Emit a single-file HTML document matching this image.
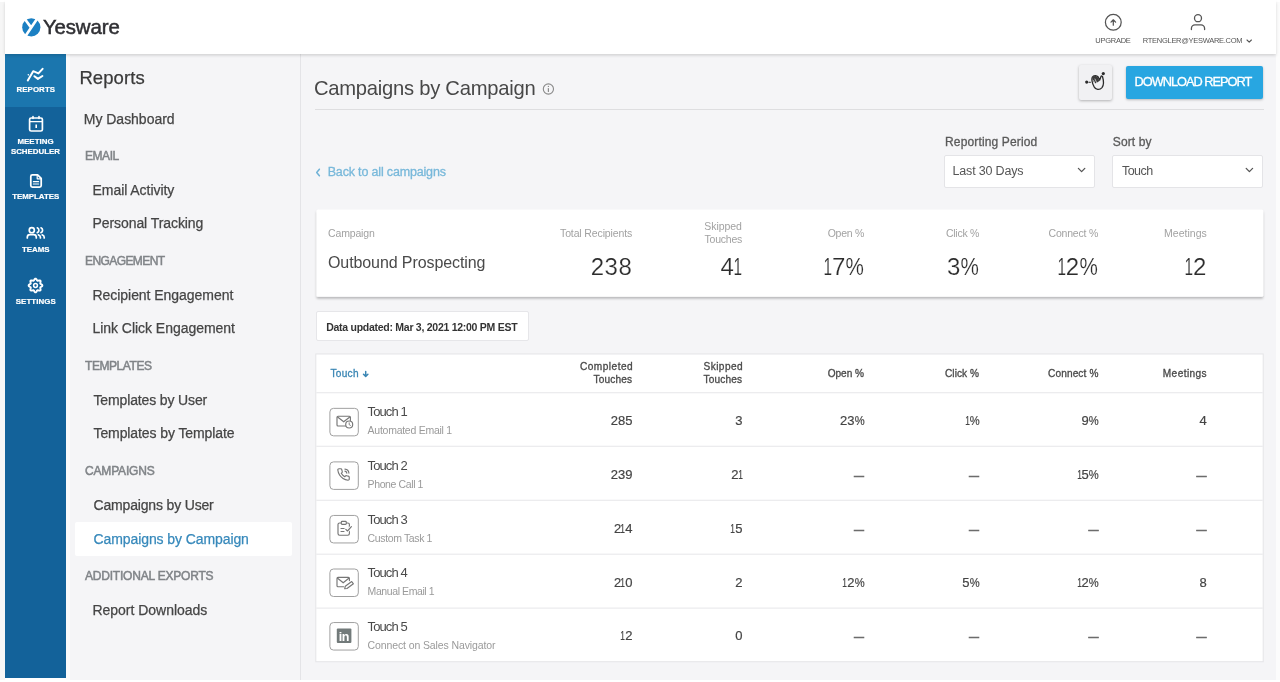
<!DOCTYPE html>
<html lang="en">
<head>
<meta charset="utf-8">
<title>Yesware Reports - Campaigns by Campaign</title>
<style>
html,body{margin:0;padding:0;}
body{width:1280px;height:682px;overflow:hidden;position:relative;background:#fff;font-family:"Liberation Sans",sans-serif;}
.a{position:absolute;}
.t{position:absolute;white-space:pre;line-height:1;color:#444;}
svg{position:absolute;overflow:visible;}
.o{display:inline-block;transform:scaleX(.64);margin:0 -.115em 0 -.135em;}
.p{display:inline-block;transform:scaleX(.86);margin:0 -.062em;}
.ln{position:absolute;height:1px;background:#e3e3e6;}
</style>
</head>
<body>
<!-- page edges -->
<div class="a" style="left:0;top:2px;width:4.5px;height:678px;background:#f6f6f6;"></div>
<div class="a" style="left:1276px;top:2px;width:4px;height:678px;background:#fcfcfc;"></div>

<!-- main backgrounds -->
<div class="a" style="left:66px;top:54px;width:234px;height:625.5px;background:#f5f5f7;"></div>
<div class="a" style="left:300px;top:54px;width:1px;height:625.5px;background:#e4e4e7;"></div>
<div class="a" style="left:301px;top:54px;width:975px;height:625.5px;background:#f5f5f7;"></div>

<div class="a" style="left:66px;top:54px;width:3.6px;height:625.5px;background:#fbfbfc;"></div>
<!-- header -->
<div class="a" style="left:4.5px;top:0;width:1271.5px;height:54px;background:#fff;box-shadow:0 1.5px 3px rgba(0,0,0,.15);z-index:1;"></div>

<!-- icon nav -->
<div class="a" style="left:5px;top:54px;width:61px;height:623.5px;background:#13629a;"></div>
<div class="a" style="left:5px;top:54px;width:61px;height:53px;background:#1b76ae;"></div>

<!-- sidebar active item -->
<div class="a" style="left:75px;top:522px;width:216.5px;height:33.5px;background:#fff;border-radius:2px;"></div>

<!-- title rule -->
<div class="ln" style="left:315px;top:108.6px;width:948.5px;background:#dedee0;"></div>

<!-- wave button -->
<div class="a" style="left:1078.7px;top:65px;width:33.5px;height:35px;background:#f1f1f3;border-radius:2px;box-shadow:0 1px 3px rgba(0,0,0,.28);"></div>
<!-- download button -->
<div class="a" style="left:1125.8px;top:66.2px;width:137px;height:32.6px;background:#28a6e1;border-radius:2px;box-shadow:0 1px 2.5px rgba(0,0,0,.25);"></div>

<!-- selects -->
<div class="a" style="left:944px;top:155px;width:149px;height:31px;background:#fff;border:1px solid #e4e4e7;border-radius:2px;"></div>
<div class="a" style="left:1112px;top:155px;width:149px;height:31px;background:#fff;border:1px solid #e4e4e7;border-radius:2px;"></div>

<!-- data updated badge -->
<div class="a" style="left:316px;top:311px;width:211px;height:28px;background:#fff;border:1px solid #e6e6e9;border-radius:2px;"></div>

<!-- card, table, row icon boxes -->
<svg width="1280" height="682" viewBox="0 0 1280 682" style="left:0;top:0;" fill="none">
<defs><filter id="cs" x="-2%" y="-10%" width="104%" height="130%"><feDropShadow dx="0" dy="1.9" stdDeviation="1.3" flood-color="#000" flood-opacity=".25"/></filter></defs>
<rect x="316.5" y="209.5" width="946.7" height="87.3" rx="1.5" fill="#fff" filter="url(#cs)"/>
<rect x="315.8" y="353.97" width="947.4" height="307.76" fill="#fff" stroke="#e4e4e7" stroke-width="1"/>
<g stroke="#e6e6e9" stroke-width="1">
<path d="M316.3 392.76 H1262.7"/>
<path d="M316.3 446.26 H1262.7"/>
<path d="M316.3 500.26 H1262.7"/>
<path d="M316.3 554.2 H1262.7"/>
<path d="M316.3 608.1 H1262.7"/>
</g>
<g stroke="#a0a0a0" stroke-width="1" fill="#fff">
<rect x="329.9" y="408.35" width="28.4" height="27.5" rx="3.6"/>
<rect x="329.9" y="461.90" width="28.4" height="27.5" rx="3.6"/>
<rect x="329.9" y="515.45" width="28.4" height="27.5" rx="3.6"/>
<rect x="329.9" y="569.00" width="28.4" height="27.5" rx="3.6"/>
<rect x="329.9" y="622.55" width="28.4" height="27.5" rx="3.6"/>
</g>
</svg>



<svg width="1280" height="682" viewBox="0 0 1280 682" style="left:0;top:0;will-change:transform;z-index:2;" fill="none" stroke-linecap="round" stroke-linejoin="round">
<!-- logo -->
<g>
<circle cx="31.3" cy="27.3" r="9.1" fill="#1c80c3"/>
<path d="M25 19.2 L31 27.4 M38 17.6 L25.2 36.4" stroke="#fff" stroke-width="2.7" stroke-linecap="butt"/>
</g>
<!-- upgrade -->
<g stroke="#555" stroke-width="1.25">
<circle cx="1113.3" cy="22.3" r="7.9"/>
<path d="M1113.3 25.2 V19.9 M1111 22.1 L1113.3 19.8 L1115.6 22.1"/>
</g>
<!-- user -->
<g stroke="#555" stroke-width="1.3">
<circle cx="1198" cy="18.2" r="3.5"/>
<path d="M1191.4 29.6 V28.4 A3.6 3.6 0 0 1 1195 24.8 H1201 A3.6 3.6 0 0 1 1204.6 28.4 V29.6"/>
<path d="M1247 40 L1249.2 42.2 L1251.4 40" stroke-width="1.1"/>
</g>
<!-- nav: reports -->
<g stroke="#fff" stroke-width="2">
<path d="M27.8 80.4 L33.2 71.2 L38.4 73.4 L42.6 68.8"/>
<path d="M34.4 76.2 L37.9 78.9 L42.4 76"/>
<path d="M28.3 74.7 L28.4 74.8" stroke-width="1.5"/>
</g>
<!-- nav: calendar -->
<g stroke="#fff" stroke-width="1.7">
<rect x="29.6" y="118" width="12.8" height="13" rx="1.6"/>
<path d="M29.8 121.6 H42.2" stroke-width="1.4"/>
<path d="M33 116.6 V118.4 M39 116.6 V118.4" stroke-width="1.6"/>
<path d="M36.2 124.4 V128" stroke-width="1.6" stroke-linecap="butt"/>
</g>
<!-- nav: templates -->
<g stroke="#fff" stroke-width="1.75">
<path d="M32.4 174.9 H37.6 L41.2 178.4 V185.4 A1.6 1.6 0 0 1 39.6 187 H32.4 A1.6 1.6 0 0 1 30.8 185.4 V176.5 A1.6 1.6 0 0 1 32.4 174.9 Z"/>
<path d="M37.2 175.4 V178.8 H40.8" stroke-width="1.2"/>
<path d="M33.4 181.7 H38.6 M33.4 184 H38.6" stroke-width="1.2"/>
</g>
<!-- nav: teams -->
<g stroke="#fff" stroke-width="1.7">
<circle cx="31.8" cy="230.2" r="2.55"/>
<path d="M27.3 238 V237.3 A2.6 2.6 0 0 1 29.9 234.7 H33.7 A2.6 2.6 0 0 1 36.3 237.3 V238"/>
<path d="M37.3 227.8 A2.6 2.6 0 0 1 37.3 232.6"/>
<path d="M41 227.8 A2.6 2.6 0 0 1 41 232.6"/>
<path d="M38.4 234.8 A2.6 2.6 0 0 1 40.4 237.3 V238"/>
<path d="M42.2 234.8 A2.6 2.6 0 0 1 44.2 237.3 V238"/>
</g>
<!-- nav: settings -->
<g stroke="#fff">
<path d="M35.50 278.65 L35.77 278.70 L36.02 278.83 L36.26 279.05 L36.48 279.31 L36.67 279.62 L36.84 279.92 L36.99 280.21 L37.14 280.45 L37.30 280.63 L37.47 280.74 L37.67 280.79 L37.91 280.77 L38.19 280.70 L38.50 280.61 L38.83 280.51 L39.18 280.43 L39.52 280.40 L39.84 280.41 L40.12 280.50 L40.34 280.66 L40.50 280.88 L40.59 281.16 L40.60 281.48 L40.57 281.82 L40.49 282.17 L40.39 282.50 L40.30 282.81 L40.23 283.09 L40.21 283.33 L40.26 283.53 L40.37 283.70 L40.55 283.86 L40.79 284.01 L41.08 284.16 L41.38 284.33 L41.69 284.52 L41.95 284.74 L42.17 284.98 L42.30 285.23 L42.35 285.50 L42.30 285.77 L42.17 286.02 L41.95 286.26 L41.69 286.48 L41.38 286.67 L41.08 286.84 L40.79 286.99 L40.55 287.14 L40.37 287.30 L40.26 287.47 L40.21 287.67 L40.23 287.91 L40.30 288.19 L40.39 288.50 L40.49 288.83 L40.57 289.18 L40.60 289.52 L40.59 289.84 L40.50 290.12 L40.34 290.34 L40.12 290.50 L39.84 290.59 L39.52 290.60 L39.18 290.57 L38.83 290.49 L38.50 290.39 L38.19 290.30 L37.91 290.23 L37.67 290.21 L37.47 290.26 L37.30 290.37 L37.14 290.55 L36.99 290.79 L36.84 291.08 L36.67 291.38 L36.48 291.69 L36.26 291.95 L36.02 292.17 L35.77 292.30 L35.50 292.35 L35.23 292.30 L34.98 292.17 L34.74 291.95 L34.52 291.69 L34.33 291.38 L34.16 291.08 L34.01 290.79 L33.86 290.55 L33.70 290.37 L33.53 290.26 L33.33 290.21 L33.09 290.23 L32.81 290.30 L32.50 290.39 L32.17 290.49 L31.82 290.57 L31.48 290.60 L31.16 290.59 L30.88 290.50 L30.66 290.34 L30.50 290.12 L30.41 289.84 L30.40 289.52 L30.43 289.18 L30.51 288.83 L30.61 288.50 L30.70 288.19 L30.77 287.91 L30.79 287.67 L30.74 287.47 L30.63 287.30 L30.45 287.14 L30.21 286.99 L29.92 286.84 L29.62 286.67 L29.31 286.48 L29.05 286.26 L28.83 286.02 L28.70 285.77 L28.65 285.50 L28.70 285.23 L28.83 284.98 L29.05 284.74 L29.31 284.52 L29.62 284.33 L29.92 284.16 L30.21 284.01 L30.45 283.86 L30.63 283.70 L30.74 283.53 L30.79 283.33 L30.77 283.09 L30.70 282.81 L30.61 282.50 L30.51 282.17 L30.43 281.82 L30.40 281.48 L30.41 281.16 L30.50 280.88 L30.66 280.66 L30.88 280.50 L31.16 280.41 L31.48 280.40 L31.82 280.43 L32.17 280.51 L32.50 280.61 L32.81 280.70 L33.09 280.77 L33.33 280.79 L33.53 280.74 L33.70 280.63 L33.86 280.45 L34.01 280.21 L34.16 279.92 L34.33 279.62 L34.52 279.31 L34.74 279.05 L34.98 278.83 L35.23 278.70 Z" stroke-width="1.9"/>
<circle cx="35.5" cy="285.5" r="1.9" stroke-width="1.5"/>
</g>
<!-- info -->
<g stroke="#8a8a8a" stroke-width="1.1">
<circle cx="548.4" cy="89" r="5.1"/>
<path d="M548.4 88.6 V91.4" stroke-width="1.2"/>
<path d="M548.4 86.3 V86.4" stroke-width="1.3"/>
</g>
<!-- back chevron -->
<path d="M319.4 169.2 L316.7 172.5 L319.4 175.8" stroke="#6fb2d6" stroke-width="1.5"/>
<!-- sort arrow -->
<path d="M365.7 371.4 V376.2 M363.5 374.2 L365.7 376.4 L367.9 374.2" stroke="#3a86b4" stroke-width="1.5"/>
<!-- select chevrons -->
<path d="M1078.4 168.4 L1081.6 171.6 L1084.8 168.4" stroke="#555" stroke-width="1.3"/>
<path d="M1246.2 168.4 L1249.4 171.6 L1252.6 168.4" stroke="#555" stroke-width="1.3"/>
<!-- wave hand -->
<g stroke="#2b2b2b" stroke-width="1.3">
<circle cx="1086.7" cy="82.1" r="1.6" fill="#2b2b2b" stroke="none"/>
<circle cx="1103.3" cy="73.6" r="1.6" fill="#2b2b2b" stroke="none"/>
<path d="M1089 82.3 H1090.4" stroke-width="1.1"/>
<path d="M1092.2 77.4 C1093.6 75.2 1096.6 74.9 1098.2 77 L1099.6 80.2 L1101 76.6 C1101.4 75.6 1102.6 75.9 1102.6 77 C1103.8 81 1104 85 1102 87.6 C1099.6 90.4 1095.6 89.8 1094 86.6 C1092.6 83.6 1091 80 1092.2 77.4 Z"/>
<path d="M1092.4 77.6 C1094 75.4 1097 75.6 1098 77.6 L1099.4 81 L1095.6 83.6 C1093.4 82.4 1092 80 1092.4 77.6 Z" fill="#3a3a3a" stroke="none"/>
<path d="M1095 79 L1097 83.4 M1093.6 80.6 L1095.4 84.4" stroke="#f1f1f3" stroke-width="0.7"/>
</g>
<!-- row icons -->
<g stroke="#767676" stroke-width="1.15">
<!-- 1: mail + clock -->
<path d="M346 426 H338 A1 1 0 0 1 337 425 V417.2 A1 1 0 0 1 338 416.2 H349.4 A1 1 0 0 1 350.4 417.2 V420.6"/>
<path d="M337.6 417 L343.7 421.8 L349.8 417"/>
<circle cx="349.2" cy="424.5" r="3.5" fill="#fff"/>
<path d="M349.2 422.8 V424.7 L350.4 425.4" stroke-width="0.9"/>
<!-- 2: phone -->
<g transform="translate(336.6,467.6) scale(0.575)" stroke-width="2">
<path d="M22 16.92v3a2 2 0 0 1-2.18 2 19.79 19.79 0 0 1-8.63-3.07 19.5 19.5 0 0 1-6-6 19.79 19.79 0 0 1-3.07-8.67A2 2 0 0 1 4.11 2h3a2 2 0 0 1 2 1.72 12.84 12.84 0 0 0 .7 2.81 2 2 0 0 1-.45 2.11L8.09 9.910a16 16 0 0 0 6 6l1.27-1.270a2 2 0 0 1 2.11-.45 12.84 12.84 0 0 0 2.810.7A2 2 0 0 1 22 16.92z"/>
<path d="M14.5 6.2A4 4 0 0 1 17.8 9.500M14.500 2.6A7.600 7.600 0 0 1 21.400 9.5"/>
</g>
<!-- 3: clipboard -->
<rect x="338" y="523" width="11.4" height="12.2" rx="1.6"/>
<rect x="341.300" y="521.4" width="5" height="3" rx="0.9" fill="#fff"/>
<path d="M341 528.5 H344.4 M341 531.5 H344"/>
<path d="M345.800 529.300 L347.500 531 L351.400 526.700" stroke="#fff" stroke-width="3"/>
<path d="M345.800 529.300 L347.500 531 L351.400 526.700"/>
<!-- 4: mail + pencil -->
<path d="M343.600 586.700 H338 A1 1 0 0 1 337 585.700 V578.400 A1 1 0 0 1 338 577.400 H348.400 A1 1 0 0 1 349.400 578.400 V580.600"/>
<path d="M337.600 578.200 L343.200 582.800 L348.800 578.200"/>
<path d="M345.300 586.200 L351.700 581.500 L353.400 583.800 L347 588.500 L344.700 588.700 Z" fill="#fff"/>
<!-- 5: linkedin -->
<rect x="336.800" y="628.600" width="14.600" height="14.400" rx="1" fill="#727a7a" stroke="none"/>
</g>
<text x="338.7" y="641.2" font-family="'Liberation Sans', sans-serif" font-size="12.5" font-weight="700" fill="#fff" stroke="none" letter-spacing="-0.3">in</text>
</svg>


<div id="tx" style="position:absolute;left:0;top:0;width:1280px;height:682px;will-change:transform;z-index:3;">
<div class="t" style="left:42.90px;top:17.23px;font-size:20.4px;letter-spacing:-0.103px;color:#2f2f33;-webkit-text-stroke:0.5px #2f2f33;">Yesware</div>
<div class="t" style="left:1095.30px;top:37.35px;font-size:7.5px;letter-spacing:-0.265px;color:#555;">UPGRADE</div>
<div class="t" style="left:1142.80px;top:37.35px;font-size:7.5px;letter-spacing:-0.283px;color:#555;">RTENGLER@YESWARE.COM</div>
<div class="t" style="left:16.40px;top:86.31px;font-size:7.9px;letter-spacing:0.087px;color:#fff;font-weight:700;-webkit-text-stroke:0.2px #fff;">REPORTS</div>
<div class="t" style="left:17.40px;top:137.91px;font-size:7.9px;letter-spacing:0.065px;color:#fff;font-weight:700;-webkit-text-stroke:0.2px #fff;">MEETING</div>
<div class="t" style="left:10.90px;top:148.41px;font-size:7.9px;color:#fff;font-weight:700;-webkit-text-stroke:0.2px #fff;">SCHEDULER</div>
<div class="t" style="left:12.30px;top:192.81px;font-size:7.9px;letter-spacing:-0.042px;color:#fff;font-weight:700;-webkit-text-stroke:0.2px #fff;">TEMPLATES</div>
<div class="t" style="left:22.10px;top:245.71px;font-size:7.9px;letter-spacing:-0.039px;color:#fff;font-weight:700;-webkit-text-stroke:0.2px #fff;">TEAMS</div>
<div class="t" style="left:15.70px;top:297.91px;font-size:7.9px;letter-spacing:0.087px;color:#fff;font-weight:700;-webkit-text-stroke:0.2px #fff;">SETTINGS</div>
<div class="t" style="left:79.40px;top:68.94px;font-size:18.5px;letter-spacing:0.079px;color:#3a3a3a;-webkit-text-stroke:0.25px #3a3a3a;">Reports</div>
<div class="t" style="left:83.80px;top:111.65px;font-size:14px;letter-spacing:-0.023px;color:#454545;-webkit-text-stroke:0.25px #454545;">My Dashboard</div>
<div class="t" style="left:85.00px;top:150.34px;font-size:12px;letter-spacing:-0.459px;color:#808488;-webkit-text-stroke:0.5px #808488;">EMAIL</div>
<div class="t" style="left:85.00px;top:255.34px;font-size:12px;letter-spacing:-0.590px;color:#808488;-webkit-text-stroke:0.5px #808488;">ENGAGEMENT</div>
<div class="t" style="left:85.00px;top:360.34px;font-size:12px;letter-spacing:-0.432px;color:#808488;-webkit-text-stroke:0.5px #808488;">TEMPLATES</div>
<div class="t" style="left:85.00px;top:465.34px;font-size:12px;letter-spacing:-0.177px;color:#808488;-webkit-text-stroke:0.5px #808488;">CAMPAIGNS</div>
<div class="t" style="left:85.00px;top:570.34px;font-size:12px;letter-spacing:-0.204px;color:#808488;-webkit-text-stroke:0.5px #808488;">ADDITIONAL EXPORTS</div>
<div class="t" style="left:92.50px;top:182.95px;font-size:14px;letter-spacing:-0.049px;color:#454545;-webkit-text-stroke:0.25px #454545;">Email Activity</div>
<div class="t" style="left:92.50px;top:216.45px;font-size:14px;letter-spacing:-0.076px;color:#454545;-webkit-text-stroke:0.25px #454545;">Personal Tracking</div>
<div class="t" style="left:92.50px;top:287.95px;font-size:14px;letter-spacing:-0.045px;color:#454545;-webkit-text-stroke:0.25px #454545;">Recipient Engagement</div>
<div class="t" style="left:92.50px;top:321.45px;font-size:14px;letter-spacing:-0.040px;color:#454545;-webkit-text-stroke:0.25px #454545;">Link Click Engagement</div>
<div class="t" style="left:93.50px;top:392.95px;font-size:14px;letter-spacing:-0.136px;color:#454545;-webkit-text-stroke:0.25px #454545;">Templates by User</div>
<div class="t" style="left:93.50px;top:426.45px;font-size:14px;letter-spacing:-0.095px;color:#454545;-webkit-text-stroke:0.25px #454545;">Templates by Template</div>
<div class="t" style="left:93.50px;top:497.95px;font-size:14px;letter-spacing:-0.167px;color:#454545;-webkit-text-stroke:0.25px #454545;">Campaigns by User</div>
<div class="t" style="left:93.50px;top:531.85px;font-size:14px;letter-spacing:-0.090px;color:#3789bb;-webkit-text-stroke:0.25px #3789bb;">Campaigns by Campaign</div>
<div class="t" style="left:92.50px;top:602.95px;font-size:14px;letter-spacing:-0.025px;color:#454545;-webkit-text-stroke:0.25px #454545;">Report Downloads</div>
<div class="t" style="left:314.00px;top:77.90px;font-size:20.2px;letter-spacing:-0.252px;color:#484848;">Campaigns by Campaign</div>
<div class="t" style="left:1134.50px;top:75.66px;font-size:12.8px;letter-spacing:-1.014px;color:#fff;-webkit-text-stroke:0.3px #fff;">DOWNLOAD REPORT</div>
<div class="t" style="left:327.70px;top:166.12px;font-size:12.5px;letter-spacing:-0.167px;color:#78b8da;-webkit-text-stroke:0.3px #78b8da;">Back to all campaigns</div>
<div class="t" style="left:945.00px;top:135.84px;font-size:12px;letter-spacing:0.148px;color:#5a5a5a;-webkit-text-stroke:0.3px #5a5a5a;">Reporting Period</div>
<div class="t" style="left:1112.80px;top:135.84px;font-size:12px;letter-spacing:0.114px;color:#5a5a5a;-webkit-text-stroke:0.3px #5a5a5a;">Sort by</div>
<div class="t" style="left:952.60px;top:164.82px;font-size:12.5px;letter-spacing:-0.191px;color:#555;">Last 30 Days</div>
<div class="t" style="left:1122.00px;top:164.82px;font-size:12.5px;letter-spacing:-0.551px;color:#555;">Touch</div>
<div class="t" style="left:328.00px;top:227.71px;font-size:10.5px;letter-spacing:-0.146px;color:#a2a2a2;">Campaign</div>
<div class="t" style="left:328.00px;top:255.26px;font-size:16px;letter-spacing:-0.096px;color:#4a4a4a;">Outbound Prospecting</div>
<div class="t" style="left:560.00px;top:227.71px;font-size:10.5px;letter-spacing:-0.125px;color:#a2a2a2;">Total Recipients</div>
<div class="t" style="left:704.30px;top:221.11px;font-size:10.5px;letter-spacing:-0.067px;color:#a2a2a2;">Skipped</div>
<div class="t" style="left:704.50px;top:234.11px;font-size:10.5px;letter-spacing:-0.226px;color:#a2a2a2;">Touches</div>
<div class="t" style="left:827.70px;top:227.71px;font-size:10.5px;letter-spacing:-0.261px;color:#a2a2a2;">Open %</div>
<div class="t" style="left:946.00px;top:227.71px;font-size:10.5px;letter-spacing:-0.278px;color:#a2a2a2;">Click %</div>
<div class="t" style="left:1048.50px;top:227.71px;font-size:10.5px;letter-spacing:-0.191px;color:#a2a2a2;">Connect %</div>
<div class="t" style="left:1164.00px;top:227.71px;font-size:10.5px;letter-spacing:0.021px;color:#a2a2a2;">Meetings</div>
<div class="t" style="right:647.78px;top:255.28px;font-size:24px;color:#2c2c2c;-webkit-text-stroke:0.2px #fff;letter-spacing:0.5px;">238</div>
<div class="t" style="right:537.78px;top:255.28px;font-size:24px;color:#2c2c2c;-webkit-text-stroke:0.2px #fff;letter-spacing:0.5px;">4<span class="o">1</span></div>
<div class="t" style="right:415.28px;top:255.28px;font-size:24px;color:#2c2c2c;-webkit-text-stroke:0.2px #fff;letter-spacing:0.5px;"><span class="o">1</span>7<span class="p">%</span></div>
<div class="t" style="right:300.28px;top:255.28px;font-size:24px;color:#2c2c2c;-webkit-text-stroke:0.2px #fff;letter-spacing:0.5px;">3<span class="p">%</span></div>
<div class="t" style="right:181.48px;top:255.28px;font-size:24px;color:#2c2c2c;-webkit-text-stroke:0.2px #fff;letter-spacing:0.5px;"><span class="o">1</span>2<span class="p">%</span></div>
<div class="t" style="right:73.28px;top:255.28px;font-size:24px;color:#2c2c2c;-webkit-text-stroke:0.2px #fff;letter-spacing:0.5px;"><span class="o">1</span>2</div>
<div class="t" style="left:326.20px;top:321.71px;font-size:10.5px;letter-spacing:-0.268px;color:#333;font-weight:700;">Data updated: Mar 3, 2021 12:00 PM EST</div>
<div class="t" style="left:330.50px;top:368.65px;font-size:10.1px;letter-spacing:0.270px;color:#3a86b4;-webkit-text-stroke:0.32px #3a86b4;">Touch</div>
<div class="t" style="left:580.00px;top:362.05px;font-size:10.1px;letter-spacing:0.475px;color:#4a4a4a;-webkit-text-stroke:0.32px #4a4a4a;">Completed</div>
<div class="t" style="left:593.50px;top:375.15px;font-size:10.1px;letter-spacing:0.159px;color:#4a4a4a;-webkit-text-stroke:0.32px #4a4a4a;">Touches</div>
<div class="t" style="left:703.50px;top:362.05px;font-size:10.1px;letter-spacing:0.440px;color:#4a4a4a;-webkit-text-stroke:0.32px #4a4a4a;">Skipped</div>
<div class="t" style="left:703.50px;top:375.15px;font-size:10.1px;letter-spacing:0.159px;color:#4a4a4a;-webkit-text-stroke:0.32px #4a4a4a;">Touches</div>
<div class="t" style="left:827.70px;top:368.65px;font-size:10.1px;letter-spacing:-0.039px;color:#4a4a4a;-webkit-text-stroke:0.32px #4a4a4a;">Open %</div>
<div class="t" style="left:945.00px;top:368.65px;font-size:10.1px;letter-spacing:0.055px;color:#4a4a4a;-webkit-text-stroke:0.32px #4a4a4a;">Click %</div>
<div class="t" style="left:1048.00px;top:368.65px;font-size:10.1px;letter-spacing:0.125px;color:#4a4a4a;-webkit-text-stroke:0.32px #4a4a4a;">Connect %</div>
<div class="t" style="left:1162.80px;top:368.65px;font-size:10.1px;letter-spacing:0.413px;color:#4a4a4a;-webkit-text-stroke:0.32px #4a4a4a;">Meetings</div>
<div class="t" style="left:367.60px;top:405.00px;font-size:13px;letter-spacing:-0.917px;color:#4a4a4a;">Touch 1</div>
<div class="t" style="left:367.60px;top:425.11px;font-size:10.5px;letter-spacing:-0.261px;color:#9a9a9a;">Automated Email 1</div>
<div class="t" style="right:647.61px;top:414.30px;font-size:13px;color:#444;-webkit-text-stroke:0.2px #444;">285</div>
<div class="t" style="right:537.61px;top:414.30px;font-size:13px;color:#444;-webkit-text-stroke:0.2px #444;">3</div>
<div class="t" style="right:415.61px;top:414.30px;font-size:13px;color:#444;-webkit-text-stroke:0.2px #444;">23<span class="p">%</span></div>
<div class="t" style="right:300.61px;top:414.30px;font-size:13px;color:#444;-webkit-text-stroke:0.2px #444;"><span class="o">1</span><span class="p">%</span></div>
<div class="t" style="right:181.21px;top:414.30px;font-size:13px;color:#444;-webkit-text-stroke:0.2px #444;">9<span class="p">%</span></div>
<div class="t" style="right:73.21px;top:414.30px;font-size:13px;color:#444;-webkit-text-stroke:0.2px #444;">4</div>
<div class="t" style="left:367.60px;top:458.75px;font-size:13px;letter-spacing:-0.917px;color:#4a4a4a;">Touch 2</div>
<div class="t" style="left:367.60px;top:478.86px;font-size:10.5px;letter-spacing:-0.389px;color:#9a9a9a;">Phone Call 1</div>
<div class="t" style="right:647.61px;top:468.05px;font-size:13px;color:#444;-webkit-text-stroke:0.2px #444;">239</div>
<div class="t" style="right:537.61px;top:468.05px;font-size:13px;color:#444;-webkit-text-stroke:0.2px #444;">2<span class="o">1</span></div>
<div class="t" style="left:854.00px;top:470.79px;font-size:10px;color:#6c6c6c;-webkit-text-stroke:0.55px #6c6c6c;">&mdash;</div>
<div class="t" style="left:969.00px;top:470.79px;font-size:10px;color:#6c6c6c;-webkit-text-stroke:0.55px #6c6c6c;">&mdash;</div>
<div class="t" style="right:181.21px;top:468.05px;font-size:13px;color:#444;-webkit-text-stroke:0.2px #444;"><span class="o">1</span>5<span class="p">%</span></div>
<div class="t" style="left:1196.40px;top:470.79px;font-size:10px;color:#6c6c6c;-webkit-text-stroke:0.55px #6c6c6c;">&mdash;</div>
<div class="t" style="left:367.60px;top:512.50px;font-size:13px;letter-spacing:-0.917px;color:#4a4a4a;">Touch 3</div>
<div class="t" style="left:367.60px;top:532.61px;font-size:10.5px;letter-spacing:-0.367px;color:#9a9a9a;">Custom Task 1</div>
<div class="t" style="right:647.61px;top:521.80px;font-size:13px;color:#444;-webkit-text-stroke:0.2px #444;">2<span class="o">1</span>4</div>
<div class="t" style="right:537.61px;top:521.80px;font-size:13px;color:#444;-webkit-text-stroke:0.2px #444;"><span class="o">1</span>5</div>
<div class="t" style="left:854.00px;top:524.53px;font-size:10px;color:#6c6c6c;-webkit-text-stroke:0.55px #6c6c6c;">&mdash;</div>
<div class="t" style="left:969.00px;top:524.53px;font-size:10px;color:#6c6c6c;-webkit-text-stroke:0.55px #6c6c6c;">&mdash;</div>
<div class="t" style="left:1088.40px;top:524.53px;font-size:10px;color:#6c6c6c;-webkit-text-stroke:0.55px #6c6c6c;">&mdash;</div>
<div class="t" style="left:1196.40px;top:524.53px;font-size:10px;color:#6c6c6c;-webkit-text-stroke:0.55px #6c6c6c;">&mdash;</div>
<div class="t" style="left:367.60px;top:566.25px;font-size:13px;letter-spacing:-0.917px;color:#4a4a4a;">Touch 4</div>
<div class="t" style="left:367.60px;top:586.36px;font-size:10.5px;letter-spacing:-0.410px;color:#9a9a9a;">Manual Email 1</div>
<div class="t" style="right:647.61px;top:575.55px;font-size:13px;color:#444;-webkit-text-stroke:0.2px #444;">2<span class="o">1</span>0</div>
<div class="t" style="right:537.61px;top:575.55px;font-size:13px;color:#444;-webkit-text-stroke:0.2px #444;">2</div>
<div class="t" style="right:415.61px;top:575.55px;font-size:13px;color:#444;-webkit-text-stroke:0.2px #444;"><span class="o">1</span>2<span class="p">%</span></div>
<div class="t" style="right:300.61px;top:575.55px;font-size:13px;color:#444;-webkit-text-stroke:0.2px #444;">5<span class="p">%</span></div>
<div class="t" style="right:181.21px;top:575.55px;font-size:13px;color:#444;-webkit-text-stroke:0.2px #444;"><span class="o">1</span>2<span class="p">%</span></div>
<div class="t" style="right:73.21px;top:575.55px;font-size:13px;color:#444;-webkit-text-stroke:0.2px #444;">8</div>
<div class="t" style="left:367.60px;top:620.00px;font-size:13px;letter-spacing:-0.917px;color:#4a4a4a;">Touch 5</div>
<div class="t" style="left:367.60px;top:640.11px;font-size:10.5px;letter-spacing:-0.114px;color:#9a9a9a;">Connect on Sales Navigator</div>
<div class="t" style="right:647.61px;top:629.30px;font-size:13px;color:#444;-webkit-text-stroke:0.2px #444;"><span class="o">1</span>2</div>
<div class="t" style="right:537.61px;top:629.30px;font-size:13px;color:#444;-webkit-text-stroke:0.2px #444;">0</div>
<div class="t" style="left:854.00px;top:632.03px;font-size:10px;color:#6c6c6c;-webkit-text-stroke:0.55px #6c6c6c;">&mdash;</div>
<div class="t" style="left:969.00px;top:632.03px;font-size:10px;color:#6c6c6c;-webkit-text-stroke:0.55px #6c6c6c;">&mdash;</div>
<div class="t" style="left:1088.40px;top:632.03px;font-size:10px;color:#6c6c6c;-webkit-text-stroke:0.55px #6c6c6c;">&mdash;</div>
<div class="t" style="left:1196.40px;top:632.03px;font-size:10px;color:#6c6c6c;-webkit-text-stroke:0.55px #6c6c6c;">&mdash;</div>
</div>
</body>
</html>
